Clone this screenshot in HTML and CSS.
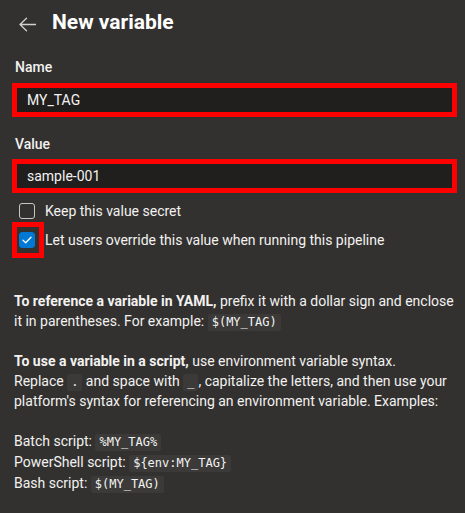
FILE: index.html
```html
<!DOCTYPE html>
<html lang="en">
<head>
<meta charset="utf-8">
<title>New variable</title>
<link rel="stylesheet" href="styles.css">
</head>
<body>
<div class="page">
  <header class="header">
    <svg class="back" width="17" height="15" viewBox="0 0 17 15" aria-hidden="true">
      <path d="M1 7.5H16.5M1 7.5L7.5 1.2M1 7.5L7.5 13.8" fill="none" stroke="#d2d0ce" stroke-width="1.3" stroke-linecap="round" stroke-linejoin="round"/>
    </svg>
    <h1 class="title">New variable</h1>
  </header>

  <label class="label label-name">Name</label>
  <div class="input">MY_TAG</div>

  <label class="label label-value">Value</label>
  <div class="input">sample-001</div>

  <div class="check-row row-secret">
    <span class="box"></span>
    <span class="check-text">Keep this value secret</span>
  </div>
  <div class="check-row row-override">
    <span class="box checked">
      <svg width="10" height="8" viewBox="0 0 10 8" aria-hidden="true"><path d="M1 4.2L3.7 6.8L9 1.2" fill="none" stroke="#fff" stroke-width="1.3" stroke-linecap="round" stroke-linejoin="round"/></svg>
      <span class="highlight"></span>
    </span>
    <span class="check-text">Let users override this value when running this pipeline</span>
  </div>

  <p class="para para-first"><strong>To reference a variable in YAML,</strong> prefix it with a dollar sign and enclose it in parentheses. For example: <code>$(MY_TAG)</code></p>

  <p class="para"><strong>To use a variable in a script,</strong> use environment variable syntax.<br>Replace <code>.</code> and space with <code>_</code>, capitalize the letters, and then use your platform's syntax for referencing an environment variable. Examples:</p>

  <div class="examples">
    <div>Batch script: <code>%MY_TAG%</code></div>
    <div>PowerShell script: <code>${env:MY_TAG}</code></div>
    <div>Bash script: <code>$(MY_TAG)</code></div>
  </div>
</div>
</body>
</html>
```
FILE: styles.css
```css
html, body {
  margin: 0;
  background: #323130;
}
body {
  font-family: Roboto, "Liberation Sans", sans-serif;
  font-size: 14px;
  line-height: 20px;
  color: #f3f2f1;
}
.page {
  padding: 0 8px 0 12px;
}
.header {
  display: flex;
  align-items: center;
  padding-top: 8px;
  height: 28px;
}
.back {
  margin-left: 7px;
  margin-top: 4px;
  flex: none;
}
.title {
  margin: 0 0 0 16px;
  font-size: 21px;
  line-height: 28px;
  font-weight: 700;
  color: #ffffff;
}
.label {
  display: block;
  padding-left: 3px;
  font-weight: 500;
  color: #f3f2f1;
}
.label-name {
  margin-top: 21px;
  margin-bottom: 6px;
}
.label-value {
  margin-top: 17px;
  margin-bottom: 5px;
}
.input {
  height: 24px;
  line-height: 24px;
  border: 5px solid #ff0000;
  background: #201f1e;
  padding-left: 10px;
  color: #f3f2f1;
}
.check-row {
  display: flex;
  align-items: center;
  gap: 10px;
  padding-left: 7px;
  min-height: 20px;
}
.row-secret {
  margin-top: 8px;
}
.row-override {
  margin-top: 9px;
}
.box {
  position: relative;
  flex: none;
  box-sizing: border-box;
  width: 16px;
  height: 16px;
  border: 1px solid #c8c6c4;
  border-radius: 3px;
  display: flex;
  align-items: center;
  justify-content: center;
}
.box.checked {
  background: #0078d4;
  border-color: #0078d4;
}
.highlight {
  position: absolute;
  left: -8px;
  top: -11px;
  width: 32px;
  height: 36px;
  box-sizing: border-box;
  border: 5px solid #ff0000;
}
.check-text {
  white-space: nowrap;
}
.para {
  margin: 20px 0 0;
  padding: 0 2px;
}
.para-first {
  margin-top: 41px;
}
strong {
  font-weight: 700;
}
code {
  display: inline-block;
  font-family: "DejaVu Sans Mono", monospace;
  font-size: 12px;
  line-height: 17px;
  background: #3b3a39;
  padding: 0 4px;
  border-radius: 2px;
  color: #f3f2f1;
}
.examples {
  margin-top: 20px;
  padding: 0 2px;
  line-height: 21px;
}
```
